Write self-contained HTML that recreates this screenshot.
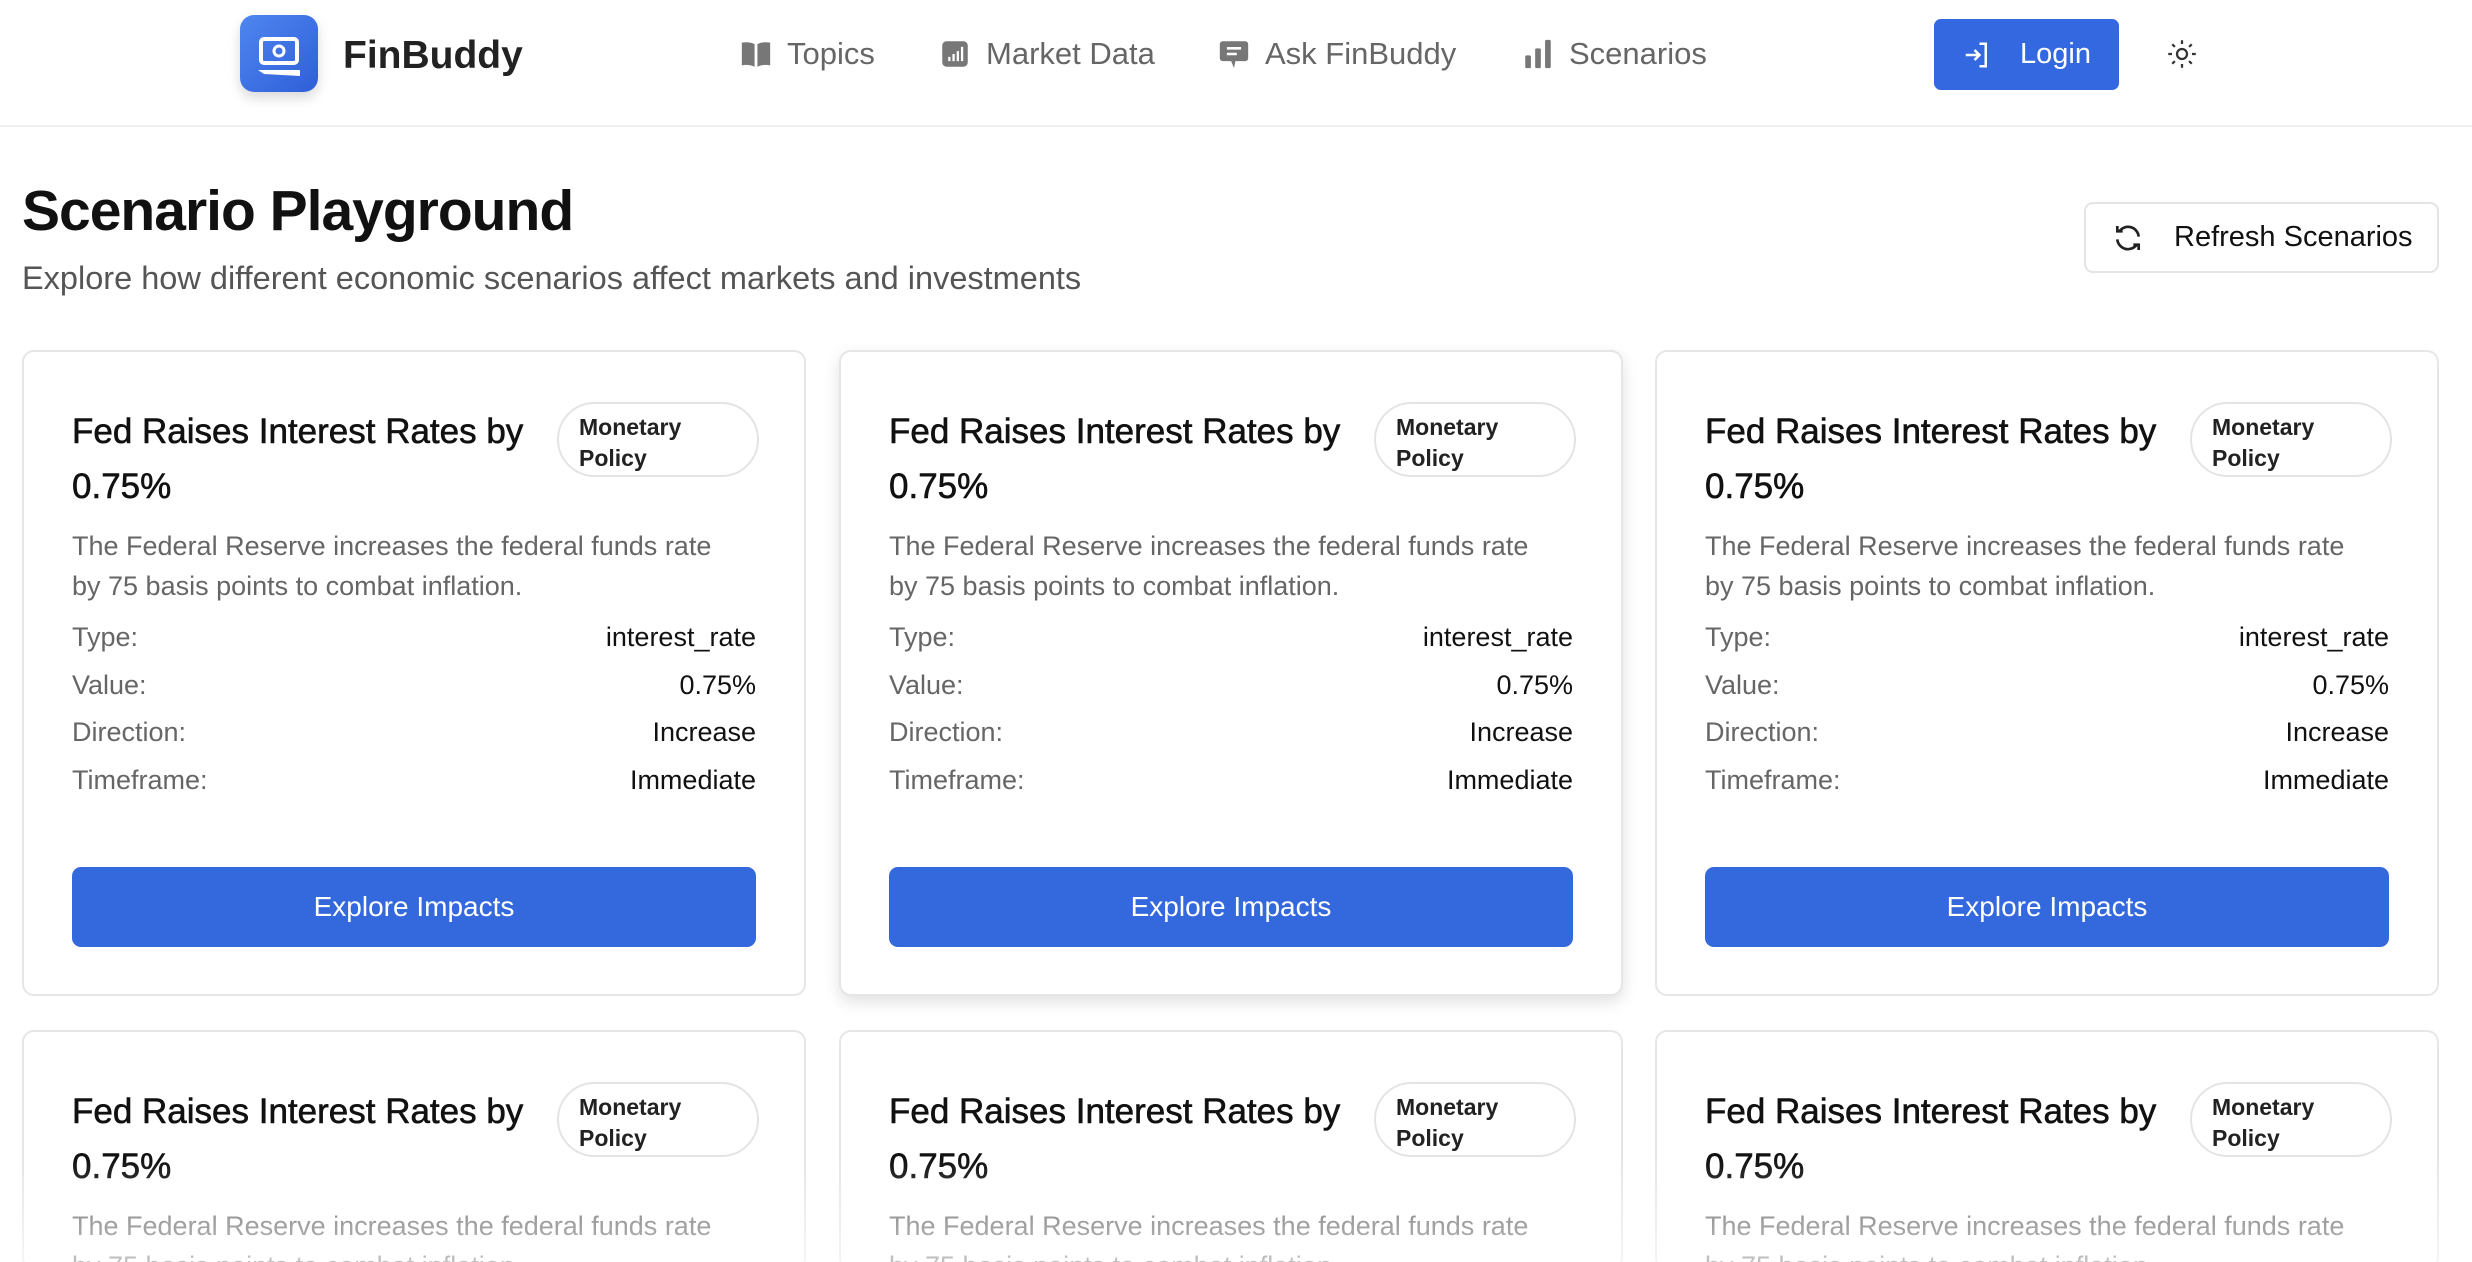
<!DOCTYPE html>
<html style="width:2472px;height:1262px;overflow:hidden"><head><meta charset="utf-8"><style>
*{box-sizing:border-box;margin:0;padding:0}
body{width:2472px;height:1262px;overflow:hidden;background:#fff;font-family:"Liberation Sans",sans-serif;color:#111;position:relative}
.hdr{position:absolute;left:0;top:0;width:2472px;height:127px;border-bottom:2px solid #f0f0f0;background:#fff}
.logo{position:absolute;left:240px;top:15px;width:78px;height:77px;border-radius:14px;background:linear-gradient(135deg,#4f86f0,#2f5fd8);box-shadow:0 6px 12px rgba(0,0,0,.15)}
.brand{position:absolute;left:343px;top:34px;font-size:39px;font-weight:bold;color:#222}
.nav{position:absolute;top:36px;font-size:31px;color:#666;display:flex;align-items:center;gap:14px}
.nav svg{width:34px;height:34px}
.login{position:absolute;left:1934px;top:19px;width:185px;height:71px;background:#3468e0;border-radius:7px;color:#fff;font-size:29px;display:flex;align-items:center;justify-content:center;gap:28px}
h1{position:absolute;left:22px;top:178px;font-size:57px;font-weight:bold;letter-spacing:-1px}
.sub{position:absolute;left:22px;top:260px;font-size:32.5px;color:#555}
.refresh{position:absolute;left:2084px;top:202px;width:355px;height:71px;border:2px solid #e4e4e4;border-radius:9px;font-size:29px;display:flex;align-items:center;padding-left:26px;gap:30px;color:#111}
.card{position:absolute;width:784px;height:646px;border:2px solid #e6e6e6;border-radius:12px;background:#fff;padding:0 48px;overflow:hidden}
.card.sh{box-shadow:0 6px 16px rgba(0,0,0,.12)}
.t{position:absolute;left:48px;top:52px;width:470px;font-size:35px;line-height:55px;color:#111;-webkit-text-stroke:0.6px #111}
.badge{position:absolute;left:533px;top:50px;width:202px;height:75px;border:2px solid #e4e4e4;border-radius:38px;font-size:23px;font-weight:bold;line-height:31px;padding:8px 20px;color:#222}
.d{position:absolute;left:48px;top:174px;width:660px;font-size:27px;line-height:40px;color:#666}
.rows{position:absolute;left:48px;right:48px;top:270px}
.r{display:flex;justify-content:space-between;font-size:27px;height:47.7px;color:#111}
.r span:first-child{color:#666}
.btn{position:absolute;left:48px;right:48px;top:515px;height:80px;background:#3469dd;border-radius:9px;color:#fff;font-size:28px;display:flex;align-items:center;justify-content:center}
.fade{position:absolute;left:0;top:1160px;width:2472px;height:102px;background:linear-gradient(rgba(255,255,255,0),rgba(255,255,255,.6))}
</style></head><body>
<div class="hdr">
<div class="logo"><svg width="78" height="77" viewBox="0 0 78 77"><rect x="21" y="24" width="36" height="24" rx="3" fill="none" stroke="#fff" stroke-width="4"/><circle cx="39" cy="36" r="5" fill="none" stroke="#fff" stroke-width="3"/><path d="M18 55 H60 V61 L24 59 Z" fill="#fff"/></svg></div>
<div class="brand">FinBuddy</div>
<div class="nav" style="left:739px"><svg viewBox="0 0 24 24"><path d="M2 4 Q7 3 11 5 V21 Q7 19 2 20Z M13 5 Q17 3 22 4 V20 Q17 19 13 21Z" fill="#777"/></svg>Topics</div>
<div class="nav" style="left:938px"><svg viewBox="0 0 24 24"><rect x="3" y="3" width="18" height="18" rx="3" fill="#777"/><path d="M8 17v-3M11 17v-5M14 17v-7M17 17V7" stroke="#fff" stroke-width="1.6"/></svg>Market Data</div>
<div class="nav" style="left:1217px"><svg viewBox="0 0 24 24"><path d="M4 3h16a2 2 0 0 1 2 2v10a2 2 0 0 1-2 2h-7l-1 5-2-5H4a2 2 0 0 1-2-2V5a2 2 0 0 1 2-2z" fill="#777"/><path d="M7 8h10M7 12h7" stroke="#fff" stroke-width="1.8"/></svg>Ask FinBuddy</div>
<div class="nav" style="left:1521px"><svg viewBox="0 0 24 24"><rect x="3" y="13" width="4" height="9" rx="1" fill="#777"/><rect x="10" y="8" width="4" height="14" rx="1" fill="#777"/><rect x="17" y="2" width="4" height="20" rx="1" fill="#777"/></svg>Scenarios</div>
<div class="login"><svg width="30" height="30" viewBox="0 0 24 24" fill="none" stroke="#fff" stroke-width="2"><path d="M14 3h5v18h-5M3 12h11M10 8l4 4-4 4"/></svg>Login</div>
<svg style="position:absolute;left:2167px;top:39px" width="30" height="30" viewBox="0 0 24 24" fill="none" stroke="#333" stroke-width="1.8"><circle cx="12" cy="12" r="4"/><path d="M12 1v3M12 20v3M1 12h3M20 12h3M4.2 4.2l2.1 2.1M17.7 17.7l2.1 2.1M4.2 19.8l2.1-2.1M17.7 6.3l2.1-2.1"/></svg>
</div>
<h1>Scenario Playground</h1>
<div class="sub">Explore how different economic scenarios affect markets and investments</div>
<div class="refresh"><svg width="32" height="32" viewBox="0 0 24 24" fill="none" stroke="#222" stroke-width="2"><path d="M20 11a8 8 0 0 0-14.5-4M4 3v4h4M4 13a8 8 0 0 0 14.5 4M20 21v-4h-4"/></svg>Refresh Scenarios</div>

<div class="card" style="left:22px;top:350px"><div class="t">Fed Raises Interest Rates by 0.75%</div><div class="badge">Monetary Policy</div><div class="d">The Federal Reserve increases the federal funds rate by 75 basis points to combat inflation.</div><div class="rows"><div class="r"><span>Type:</span><span>interest_rate</span></div><div class="r"><span>Value:</span><span>0.75%</span></div><div class="r"><span>Direction:</span><span>Increase</span></div><div class="r"><span>Timeframe:</span><span>Immediate</span></div></div><div class="btn">Explore Impacts</div></div>
<div class="card sh" style="left:839px;top:350px"><div class="t">Fed Raises Interest Rates by 0.75%</div><div class="badge">Monetary Policy</div><div class="d">The Federal Reserve increases the federal funds rate by 75 basis points to combat inflation.</div><div class="rows"><div class="r"><span>Type:</span><span>interest_rate</span></div><div class="r"><span>Value:</span><span>0.75%</span></div><div class="r"><span>Direction:</span><span>Increase</span></div><div class="r"><span>Timeframe:</span><span>Immediate</span></div></div><div class="btn">Explore Impacts</div></div>
<div class="card" style="left:1655px;top:350px"><div class="t">Fed Raises Interest Rates by 0.75%</div><div class="badge">Monetary Policy</div><div class="d">The Federal Reserve increases the federal funds rate by 75 basis points to combat inflation.</div><div class="rows"><div class="r"><span>Type:</span><span>interest_rate</span></div><div class="r"><span>Value:</span><span>0.75%</span></div><div class="r"><span>Direction:</span><span>Increase</span></div><div class="r"><span>Timeframe:</span><span>Immediate</span></div></div><div class="btn">Explore Impacts</div></div>

<div class="card" style="left:22px;top:1030px;height:240px"><div class="t">Fed Raises Interest Rates by 0.75%</div><div class="badge">Monetary Policy</div><div class="d">The Federal Reserve increases the federal funds rate by 75 basis points to combat inflation.</div></div>
<div class="card" style="left:839px;top:1030px;height:240px"><div class="t">Fed Raises Interest Rates by 0.75%</div><div class="badge">Monetary Policy</div><div class="d">The Federal Reserve increases the federal funds rate by 75 basis points to combat inflation.</div></div>
<div class="card" style="left:1655px;top:1030px;height:240px"><div class="t">Fed Raises Interest Rates by 0.75%</div><div class="badge">Monetary Policy</div><div class="d">The Federal Reserve increases the federal funds rate by 75 basis points to combat inflation.</div></div>
<div class="fade"></div>
</body></html>
